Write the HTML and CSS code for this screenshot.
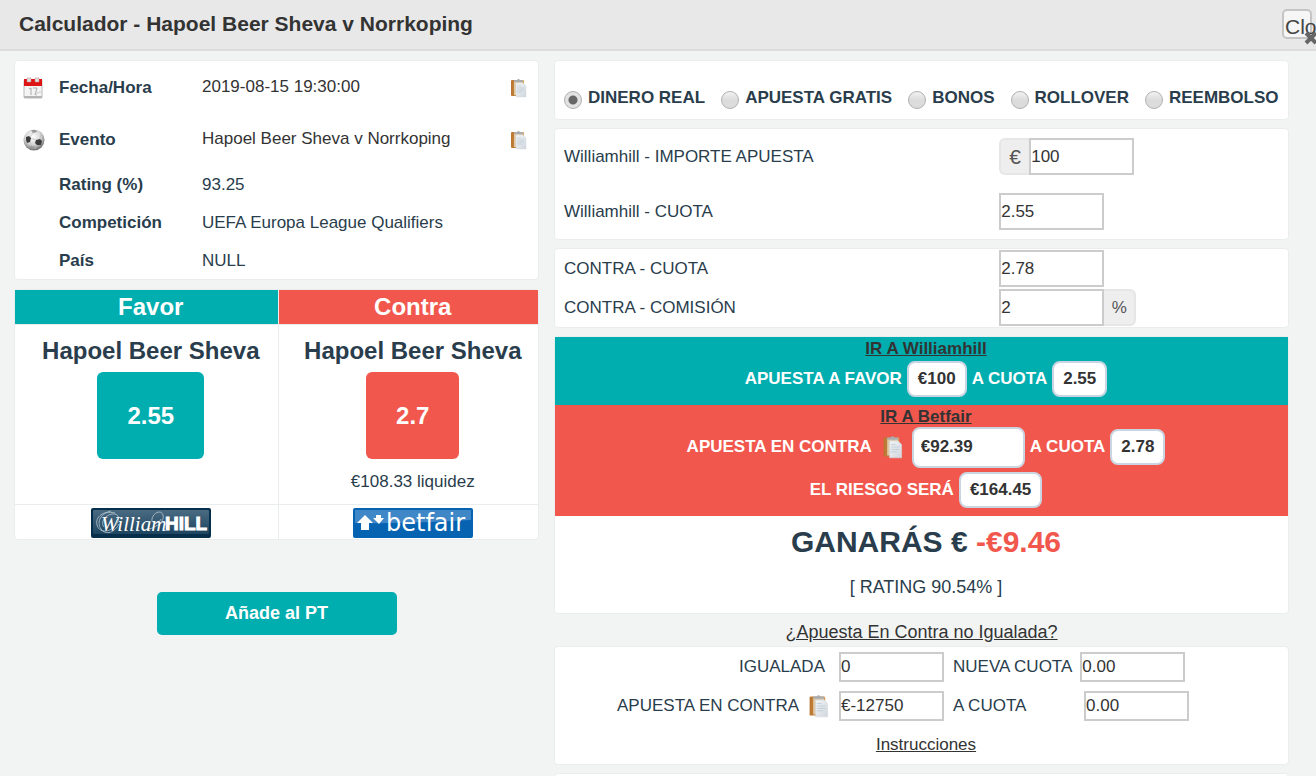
FILE: index.html
```html
<!DOCTYPE html>
<html lang="es">

<head>
    <meta charset="UTF-8">
    <meta name="viewport" content="width=device-width, initial-scale=1.0">
    <title>Calculador</title>

    <link rel="stylesheet" href="styles.css">
</head>

<body>
    <svg class="sprite" aria-hidden="true">
        <linearGradient id="board" x1="0" y1="0" x2="1" y2="0">
            <stop offset="0" stop-color="#b9752f" />
            <stop offset="1" stop-color="#d9a25c" />
        </linearGradient>
        <linearGradient id="sheet" x1="0" y1="0" x2="1" y2="1">
            <stop offset="0" stop-color="#f4f6f8" />
            <stop offset="1" stop-color="#cfd6dc" />
        </linearGradient>
        <radialGradient id="leather" cx="45%" cy="35%" r="62%">
            <stop offset="0" stop-color="#fff" />
            <stop offset="0.6" stop-color="#d6d6d6" />
            <stop offset="1" stop-color="#777" />
        </radialGradient>
        <linearGradient id="navy" x1="0" y1="0" x2="0" y2="1">
            <stop offset="0" stop-color="#4a6b82" />
            <stop offset="1" stop-color="#1d4560" />
        </linearGradient>
        <symbol id="clipboard" viewBox="0 0 18 20">
            <rect x="2" y="2" width="13" height="16" rx="1" fill="url(#board)" />
            <rect x="5" y="3" width="9" height="14" fill="#dfc9a8" />
            <path d="M5 4V2h3l1-1h1l1 1h3v2z" fill="#a9adb0" />
            <path d="M7 5h7l3 3v11H7z" fill="url(#sheet)" stroke="#d3d9de" stroke-width="0.5" />
            <path d="M8 8h4M8 10h7M8 12h7M8 14h5" stroke="#b4c4d0" stroke-width="0.6" />
        </symbol>
    </svg>

    <header>
        <h1>Calculador - Hapoel Beer Sheva v Norrkoping</h1>
        <button class="close">Close
            <svg viewBox="0 0 14 14" width="14" height="14" aria-hidden="true">
                <path d="M2 2l10 10M12 2L2 12" stroke="#666" stroke-width="4" />
            </svg>
        </button>
    </header>

    <main>
        <div class="column">
            <section class="card">
                <table class="event">
                    <tr class="tall">
                        <td class="icon">
                            <svg viewBox="0 0 20 22" width="20" height="22" aria-hidden="true">
                                <rect x="1" y="3" width="18" height="18" rx="1" fill="#f4f4f4" stroke="#bbb" />
                                <path d="M1 19h18v2H1z" fill="#b5b5b5" />
                                <path d="M1 2h18v7H1z" fill="#de1414" />
                                <path d="M4 1h4v4H4zM12 1h4v4h-4z" fill="#e4dede" stroke="#b88" stroke-width="0.5" />
                                <path d="M6 12l2-1v7M10 11h4l-2 7" fill="none" stroke="#aaa" />
                                <path d="M13 19q0-4 5-4" fill="none" stroke="#ccc" />
                            </svg>
                        </td>
                        <th>Fecha/Hora</th>
                        <td class="dark">2019-08-15 19:30:00</td>
                        <td class="copy"><svg width="18" height="20"><use href="#clipboard" /></svg></td>
                    </tr>
                    <tr class="tall">
                        <td class="icon">
                            <svg viewBox="0 0 22 22" width="22" height="22" aria-hidden="true">
                                <circle cx="11" cy="11" r="10.5" fill="url(#leather)" />
                                <path d="M3 8l3-1 2 2-1 4-3 1-1-3zM13 11l4-1 2 2-1 4-4 0-2-2z" fill="#3c3c3c" />
                                <path d="M8 1l5 0 1 2-4 1zM6 18l3-1 3 2-3 1z" fill="#999" />
                                <path d="M8 9l5 2M10 4l-3 4M14 16l-2 4M17 10l1-5M7 13l2 4" stroke="#bbb" stroke-width="0.7" />
                            </svg>
                        </td>
                        <th>Evento</th>
                        <td class="dark">Hapoel Beer Sheva v Norrkoping</td>
                        <td class="copy"><svg width="18" height="20"><use href="#clipboard" /></svg></td>
                    </tr>
                    <tr>
                        <td></td>
                        <th>Rating (%)</th>
                        <td>93.25</td>
                        <td></td>
                    </tr>
                    <tr>
                        <td></td>
                        <th>Competición</th>
                        <td>UEFA Europa League Qualifiers</td>
                        <td></td>
                    </tr>
                    <tr>
                        <td></td>
                        <th>País</th>
                        <td>NULL</td>
                        <td></td>
                    </tr>
                </table>
            </section>

            <section class="card odds-card">
                <table class="odds">
                    <tr>
                        <th class="back">Favor</th>
                        <th class="lay">Contra</th>
                    </tr>
                    <tr class="prices">
                        <td>
                            <h2>Hapoel Beer Sheva</h2>
                            <span class="price back">2.55</span>
                        </td>
                        <td>
                            <h2>Hapoel Beer Sheva</h2>
                            <span class="price lay">2.7</span>
                            <p class="liquidity">€108.33 liquidez</p>
                        </td>
                    </tr>
                    <tr class="logos">
                        <td>
                            <svg viewBox="0 0 120 30" width="120" height="30" role="img" aria-label="William Hill">
                                <rect width="120" height="30" rx="2" fill="#062f4c" />
                                <rect x="2" y="2" width="116" height="24" rx="1" fill="url(#navy)" />
                                <g fill="none" stroke="#b9c8d2" stroke-width="0.8">
                                    <path d="M24 5C12 2 4 9 6 17s12 8 18 1 4-13-3-12-12 9-8 13" />
                                    <path d="M20 3C10 5 5 14 10 21s14 3 18-5" />
                                    <path d="M58 21c8-2 16-8 14-14s-10-2-11 4 7 5 9 0" />
                                </g>
                                <text x="10" y="23" class="logo-script">William</text>
                                <text x="74" y="22" class="logo-hill">HILL</text>
                            </svg>
                        </td>
                        <td>
                            <svg viewBox="0 0 120 30" width="120" height="30" role="img" aria-label="Betfair">
                                <rect width="120" height="30" rx="2" fill="#0563b1" />
                                <path d="M2 2h116v10Q60 16 2 15z" fill="#3f87c6" />
                                <path d="M12 7l8 8h-4v7H8v-7H4zM23 7h5v3h3l-5 6-6-6h3z" fill="#fff" />
                                <text x="33" y="23" class="logo-betfair">betfair</text>
                            </svg>
                        </td>
                    </tr>
                </table>
            </section>

            <button class="add">Añade al PT</button>
        </div>

        <div class="column">
            <section class="card modes">
                <label><input type="radio" name="mode" checked>DINERO REAL</label>
                <label><input type="radio" name="mode">APUESTA GRATIS</label>
                <label><input type="radio" name="mode">BONOS</label>
                <label><input type="radio" name="mode">ROLLOVER</label>
                <label><input type="radio" name="mode">REEMBOLSO</label>
            </section>

            <section class="card">
                <div class="field roomy">
                    <label for="stake">Williamhill - IMPORTE APUESTA</label>
                    <div class="group">
                        <span class="addon before">€</span>
                        <input type="text" id="stake" value="100">
                    </div>
                </div>
                <div class="field roomy">
                    <label for="backOdds">Williamhill - CUOTA</label>
                    <div class="group">
                        <input type="text" id="backOdds" value="2.55">
                    </div>
                </div>
            </section>

            <section class="card">
                <div class="field">
                    <label for="layOdds">CONTRA - CUOTA</label>
                    <div class="group">
                        <input type="text" id="layOdds" value="2.78">
                    </div>
                </div>
                <div class="field">
                    <label for="commission">CONTRA - COMISIÓN</label>
                    <div class="group">
                        <input type="text" id="commission" value="2">
                        <span class="addon after">%</span>
                    </div>
                </div>
            </section>

            <section class="card result">
                <div class="bet back">
                    <a href="#">IR A Williamhill</a>
                    <div class="line">
                        <span>APUESTA A FAVOR</span>
                        <span class="pill">€100</span>
                        <span>A CUOTA</span>
                        <span class="pill">2.55</span>
                    </div>
                </div>
                <div class="bet lay">
                    <a href="#">IR A Betfair</a>
                    <div class="line">
                        <label for="layStake">APUESTA EN CONTRA</label>
                        <svg class="clip" width="22" height="24"><use href="#clipboard" /></svg>
                        <input type="text" id="layStake" class="pill" value="€92.39">
                        <span>A CUOTA</span>
                        <span class="pill">2.78</span>
                    </div>
                    <div class="line">
                        <span>EL RIESGO SERÁ</span>
                        <span class="pill">€164.45</span>
                    </div>
                </div>
                <p class="profit">GANARÁS € <span>-€9.46</span></p>
                <p class="rating">[ RATING 90.54% ]</p>
            </section>

            <p class="unmatched"><a href="#">¿Apuesta En Contra no Igualada?</a></p>

            <section class="card">
                <div class="partial">
                    <label for="matched">IGUALADA</label>
                    <div class="group">
                        <input type="text" id="matched" value="0">
                        <label for="newOdds">NUEVA CUOTA</label>
                        <input type="text" id="newOdds" value="0.00">
                    </div>
                </div>
                <div class="partial">
                    <label for="newLay">APUESTA EN CONTRA
                        <svg class="clip" width="22" height="24"><use href="#clipboard" /></svg>
                    </label>
                    <div class="group">
                        <input type="text" id="newLay" value="€-12750">
                        <label for="atOdds" class="wide">A CUOTA</label>
                        <input type="text" id="atOdds" value="0.00">
                    </div>
                </div>
                <p class="help"><a href="#">Instrucciones</a></p>
            </section>

            <section class="card empty"></section>
        </div>
    </main>
</body>

</html>
```
FILE: styles.css
```css
* {
    box-sizing: border-box;
    font-family: "Liberation Sans", Arial, sans-serif;
    margin: 0;
    padding: 0;
}

body {
    height: 100vh;
    overflow: hidden;
    background: #f2f4f4;
    color: #293d4c;
    font-size: 17px;
}

a {
    color: #333;
}

.sprite {
    position: absolute;
    width: 0;
    height: 0;
}

header {
    display: flex;
    justify-content: space-between;
    align-items: center;
    padding: 9px 4px 10px 19px;
    background: #e8e8e8;
    border-bottom: 2px solid #dcdcdc;
}

h1 {
    font-size: 21px;
    color: #333;
}

.close {
    position: relative;
    width: 30px;
    height: 30px;
    padding: 4px 0 0 1px;
    border: 2px solid #c5c5c5;
    border-radius: 5px;
    background: #f6f6f6;
    color: #444;
    font-size: 21px;
    text-align: left;
}

.close svg {
    position: absolute;
    left: 20px;
    top: 20px;
}

main {
    display: grid;
    grid-template-columns: 525fr 735fr;
    gap: 15px;
    padding: 9px 27px 0 14px;
}

.column {
    display: flex;
    flex-direction: column;
}

.card {
    margin-bottom: 8px;
    border: 1px solid #eaeded;
    border-radius: 4px;
    background: white;
}

table {
    width: 100%;
    border-collapse: collapse;
    table-layout: fixed;
}

/* event details */
.event tr {
    height: 38px;
}

.event .tall {
    height: 52px;
}

.event th,
.event td {
    padding-top: 2px;
}

.event th {
    width: 143px;
    text-align: left;
}

.event .dark {
    padding-top: 0;
    color: #333;
}

.event .icon {
    width: 44px;
    padding-left: 8px;
}

.event .copy {
    width: 29px;
}

.event svg,
.odds svg {
    display: block;
}

.back {
    background: #00aeb0;
}

.lay {
    background: #f2574d;
}

/* odds comparison */
.odds-card {
    margin-top: 1px;
}

.odds th,
.odds td {
    padding-left: 9px;
    text-align: center;
    vertical-align: top;
}

.odds th:first-child,
.odds td:first-child {
    width: 50.3%;
    border-right: 1px solid #eaeded;
}

.odds th {
    height: 34px;
    color: white;
    font-size: 24px;
    vertical-align: middle;
}

.odds td {
    border-top: 1px solid #eaeded;
}

.prices {
    height: 180px;
}

h2 {
    padding: 7px 0 2px;
    font-size: 24px;
    line-height: 38px;
}

.price {
    display: inline-block;
    padding: 0 30px;
    border-radius: 6px;
    color: white;
    font-size: 24px;
    font-weight: bold;
    line-height: 87px;
}

.liquidity {
    padding-top: 13px;
}

.odds .logos td {
    padding: 3px 0 1px 9px;
}

.logos svg {
    margin: 0 auto;
}

.logo-script {
    font-family: "Liberation Serif", serif;
    font-size: 21px;
    font-style: italic;
    fill: white;
}

.logo-hill {
    font-size: 19px;
    font-weight: bold;
    fill: white;
    stroke: white;
}

.logo-betfair {
    font-family: "DejaVu Sans", sans-serif;
    font-size: 24px;
    fill: white;
}

.add {
    align-self: center;
    width: 240px;
    height: 43px;
    margin-top: 44px;
    border: none;
    border-radius: 5px;
    background: #00aeb0;
    color: white;
    font-size: 18px;
    font-weight: bold;
}

/* bet type */
.modes {
    display: flex;
    gap: 16px;
    padding: 25px 0 10px 9px;
    font-weight: bold;
    white-space: nowrap;
}

.modes label {
    display: flex;
    gap: 6px;
    line-height: 23px;
}

input[type=radio] {
    appearance: none;
    align-self: flex-end;
    width: 18px;
    height: 18px;
    border: 1px solid #b0b0b0;
    border-radius: 50%;
    background: linear-gradient(#f2f2f2, #dcdcdc 50%);
}

input[type=radio]:checked {
    background: radial-gradient(#666 4px, #e2e2e2 5px);
}

/* stake and odds fields */
.field {
    display: grid;
    grid-template-columns: 14fr 9fr;
    align-items: center;
    height: 39px;
    padding: 0 9px;
}

.roomy {
    height: 55px;
}

.group {
    display: flex;
    align-items: center;
}

input[type=text] {
    width: 105px;
    height: 37px;
    border: 2px solid #ccc;
    background: white;
    color: #333;
    font-size: 17px;
}

.addon {
    height: 37px;
    border: 2px solid #e6e6e6;
    background: #eee;
    color: #555;
    line-height: 34px;
    text-align: center;
}

.before {
    width: 30px;
    border-right: none;
    border-radius: 6px 0 0 6px;
    font-size: 21px;
}

.after {
    width: 32px;
    border-left: none;
    border-radius: 0 6px 6px 0;
}

/* result */
.result {
    padding-bottom: 7px;
    text-align: center;
}

.result,
.unmatched {
    margin-bottom: 0;
}

.bet {
    padding: 0 0 8px 9px;
    color: white;
    font-weight: bold;
}

.bet a {
    line-height: 24px;
}

.line {
    display: flex;
    justify-content: center;
    align-items: center;
    gap: 5px;
    height: 36px;
}

.line + .line {
    margin-top: 7px;
}

.pill {
    padding: 0 9px;
    border: 2px solid #c9d6e2;
    border-radius: 8px;
    background: white;
    color: #333;
    line-height: 32px;
}

input[type=text].pill {
    width: 113px;
    height: 41px;
    padding: 0 7px;
    border-color: #c9d6e2;
    font-weight: bold;
}

.line .clip {
    margin: 0 4px;
}

.profit {
    padding-left: 9px;
    font-size: 30px;
    font-weight: bold;
    line-height: 52px;
}

.profit span {
    color: #f2574d;
}

.rating {
    padding-left: 9px;
    font-size: 18px;
    line-height: 38px;
}

.unmatched {
    padding-top: 5px;
    font-size: 18px;
    line-height: 27px;
    text-align: center;
}

/* partially matched bets */
.partial {
    display: grid;
    grid-template-columns: 274fr 449fr;
    align-items: center;
    gap: 10px;
    height: 39px;
}

.partial > label {
    display: flex;
    justify-content: flex-end;
    align-items: center;
    gap: 8px;
    padding-right: 4px;
    white-space: nowrap;
}

.partial > label .clip {
    margin-right: -4px;
}

.partial .group label {
    margin: 0 8px 0 9px;
}

.partial .wide {
    width: 123px;
}

.partial input[type=text] {
    height: 30px;
}

.help {
    padding-left: 9px;
    line-height: 39px;
    text-align: center;
}

.empty {
    height: 120px;
}
```
